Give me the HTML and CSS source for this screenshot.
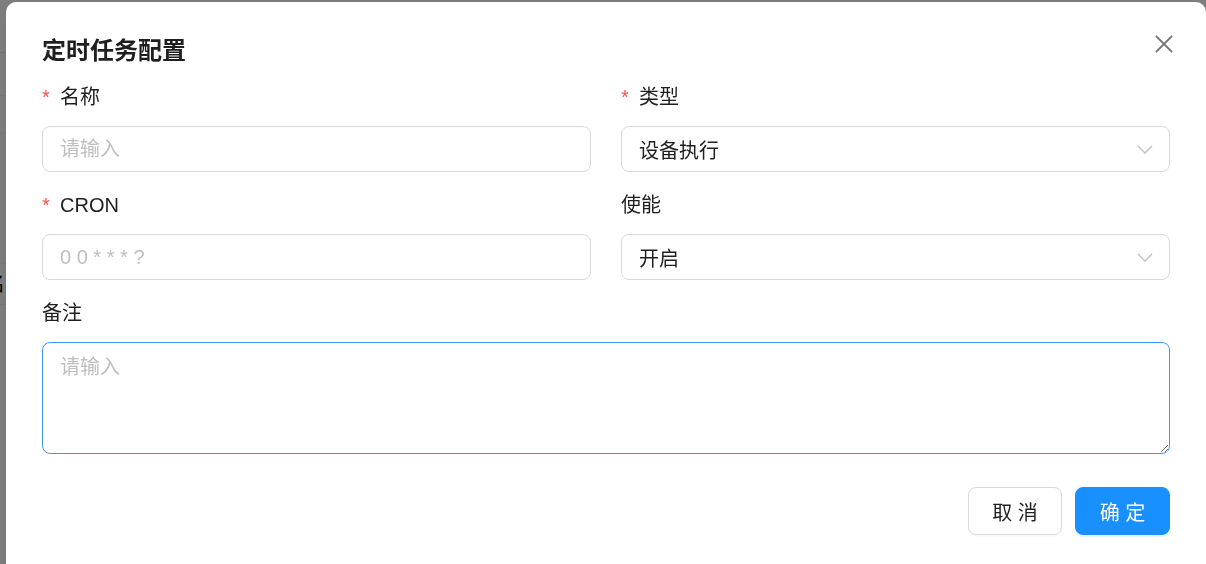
FILE: index.html
```html
<!DOCTYPE html>
<html lang="zh-CN">
<head>
    <meta charset="UTF-8">
    <meta name="viewport" content="width=device-width, initial-scale=1.0">
    <title>定时任务配置</title>
    <link rel="stylesheet" href="styles.css">
</head>
<body>

<!-- página de fundo (lista de tarefas) -->
<div class="page">
    <div class="page-header"></div>
    <div class="page-row"></div>
    <div class="page-row tall"></div>
    <div class="page-row name-row"><span>名称</span></div>
</div>

<div class="mask"></div>

<div class="modal">
    <button class="modal-close" aria-label="关闭">
        <svg width="18" height="18" viewBox="0 0 18 18">
            <path d="M1 1 L17 17 M17 1 L1 17" stroke="#777" stroke-width="1.8" fill="none"/>
        </svg>
    </button>

    <h2 class="modal-title">定时任务配置</h2>

    <form class="form">
        <div class="form-grid">
            <div class="form-item">
                <label class="required">名称</label>
                <input class="input" type="text" placeholder="请输入">
            </div>
            <div class="form-item">
                <label class="required">类型</label>
                <div class="select">
                    <span>设备执行</span>
                    <svg class="arrow" width="16" height="9" viewBox="0 0 16 9">
                        <path d="M1 1 L8 8 L15 1" stroke="#bfbfbf" stroke-width="1.3" fill="none"/>
                    </svg>
                </div>
            </div>
            <div class="form-item">
                <label class="required">CRON</label>
                <input class="input" type="text" placeholder="0 0 * * * ?">
            </div>
            <div class="form-item">
                <label>使能</label>
                <div class="select">
                    <span>开启</span>
                    <svg class="arrow" width="16" height="9" viewBox="0 0 16 9">
                        <path d="M1 1 L8 8 L15 1" stroke="#bfbfbf" stroke-width="1.3" fill="none"/>
                    </svg>
                </div>
            </div>
        </div>

        <div class="form-item last">
            <label>备注</label>
            <textarea class="textarea" placeholder="请输入"></textarea>
        </div>
    </form>

    <div class="modal-footer">
        <button class="btn">取 消</button>
        <button class="btn btn-primary">确 定</button>
    </div>
</div>

</body>
</html>
```

FILE: styles.css
```css
body {
    margin: 0;
    padding: 0;
    background-color: #fff;
    font-family: "Liberation Sans", "Noto Sans CJK SC", sans-serif;
    overflow: hidden;
}
.page {
    padding-top: 52px;
}
.page-header {
    border-top: 1px solid #e2e2e2;
    height: 42px;
}
.page-row {
    border-top: 1px solid #f2f2f2;
    height: 36px;
}
.page-row.tall {
    height: 130px;
    background-color: #fafafa;
}
.page-row.name-row {
    height: 40px;
    font-size: 20px;
    line-height: 40px;
    color: #000;
    border-bottom: 1px solid #f2f2f2;
}
.name-row span {
    margin-left: -15px;
}
.mask {
    position: fixed;
    inset: 0;
    background-color: rgba(0, 0, 0, 0.5);
}
.modal {
    position: absolute;
    top: 2px;
    left: 6px;
    width: 1200px;
    height: 580px;
    box-sizing: border-box;
    padding: 33px 36px 0;
    background-color: #fff;
    border-radius: 10px;
    box-shadow: 0 6px 16px rgba(0, 0, 0, 0.08);
}
.modal-close {
    position: absolute;
    top: 33px;
    right: 33px;
    width: 18px;
    height: 18px;
    padding: 0;
    border: none;
    background: none;
    cursor: pointer;
}
.modal-close svg {
    display: block;
}
.modal-title {
    margin: 0 0 16px;
    font-size: 24px;
    line-height: 32px;
    font-weight: 600;
    color: #1f1f1f;
}
.form-grid {
    display: grid;
    grid-template-columns: 1fr 1fr;
    column-gap: 30px;
}
.form-item {
    display: flex;
    flex-direction: column;
    margin-bottom: 19px;
}
.form-item.last {
    margin-bottom: 0;
}
.form-item label {
    height: 28px;
    line-height: 28px;
    margin-bottom: 15px;
    font-size: 20px;
    color: #1f1f1f;
}
.form-item label.required::before {
    content: "*";
    display: inline-block;
    width: 18px;
    color: #ff4d4f;
    font-size: 20px;
}
.input,
.select,
.textarea {
    box-sizing: border-box;
    border: 1px solid #d9d9d9;
    border-radius: 8px;
    font-family: inherit;
    font-size: 20px;
    color: #1f1f1f;
    background-color: #fff;
}
.input {
    height: 46px;
    padding: 0 17px;
    outline: none;
}
.input::placeholder,
.textarea::placeholder {
    color: #bfbfbf;
}
.select {
    height: 46px;
    padding: 0 16px 0 17px;
    display: flex;
    align-items: center;
    justify-content: space-between;
}
.textarea {
    height: 112px;
    padding: 10px 17px;
    line-height: 28px;
    border-color: #4096ff;
    outline: none;
    resize: vertical;
}
.modal-footer {
    display: flex;
    justify-content: flex-end;
    gap: 13px;
    margin-top: 33px;
}
.btn {
    height: 48px;
    width: 94px;
    padding: 0;
    font-family: inherit;
    font-size: 20px;
    color: #1f1f1f;
    background-color: #fff;
    border: 1px solid #d9d9d9;
    border-radius: 8px;
    box-shadow: 0 2px 0 rgba(0, 0, 0, 0.02);
    cursor: pointer;
}
.btn-primary {
    width: 95px;
    color: #fff;
    background-color: #1890ff;
    border-color: #1890ff;
    box-shadow: 0 2px 0 rgba(5, 145, 255, 0.1);
}
```
